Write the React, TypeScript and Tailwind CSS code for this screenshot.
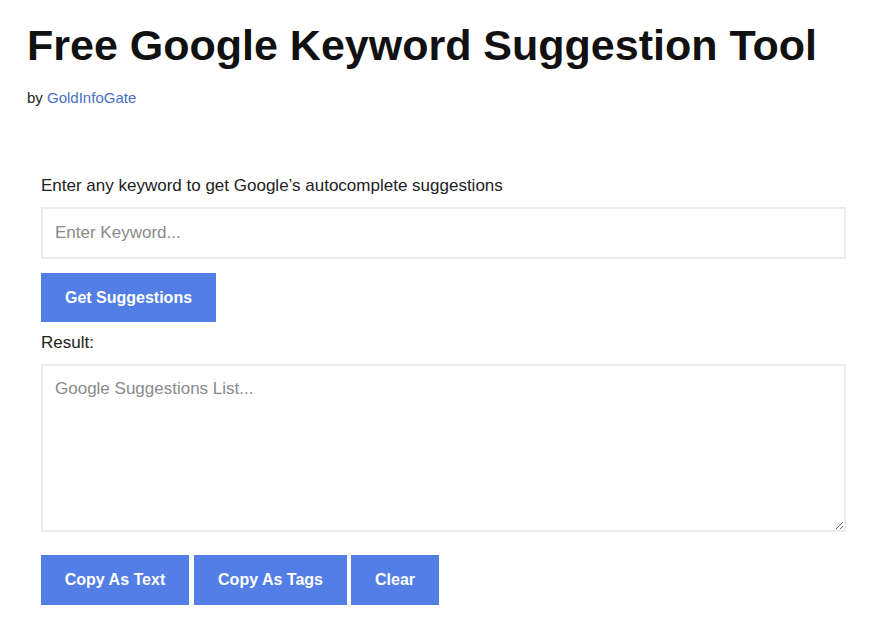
import React from "react";

export default function App() {
  const btn =
    "h-[50px] bg-[#527ee6] text-white font-bold text-[16px] whitespace-nowrap flex items-center justify-center";
  return (
    <div className="min-h-screen bg-white text-[#222] font-['Liberation_Sans',Arial,sans-serif]">
      <div className="px-[27px] pt-[21px]">
        <h1 className="text-[43px] leading-[48px] font-bold text-[#111] whitespace-nowrap">
          Free Google Keyword Suggestion Tool
        </h1>
        <p className="mt-[19px] text-[15px] leading-[20px] text-[#222]">
          by <a className="text-[#4a6fc4]">GoldInfoGate</a>
        </p>
      </div>
      <div className="pl-[41px] pr-[26px]">
        <p className="mt-[68px] text-[17px] leading-[20px] text-[#222]">
          Enter any keyword to get Google’s autocomplete suggestions
        </p>
        <input
          className="mt-[11px] block w-full h-[52px] border-2 border-[#ececec] px-[12px] text-[17px] placeholder:text-[#8a8a8a] outline-none"
          placeholder="Enter Keyword..."
        />
        <button className="mt-[14px] h-[49px] w-[175px] bg-[#527ee6] text-white font-bold text-[16px] whitespace-nowrap">
          Get Suggestions
        </button>
        <p className="mt-[11px] text-[17px] leading-[20px] text-[#222]">Result:</p>
        <textarea
          className="mt-[11px] block w-full h-[168px] border-2 border-[#ececec] px-[12px] py-[13px] text-[17px] leading-[20px] placeholder:text-[#8a8a8a] outline-none"
          placeholder="Google Suggestions List..."
        />
        <div className="mt-[23px] flex">
          <button className={btn + " w-[148px]"}>Copy As Text</button>
          <button className={btn + " w-[153px] ml-[5px]"}>Copy As Tags</button>
          <button className={btn + " w-[88px] ml-[4px]"}>Clear</button>
        </div>
      </div>
    </div>
  );
}
